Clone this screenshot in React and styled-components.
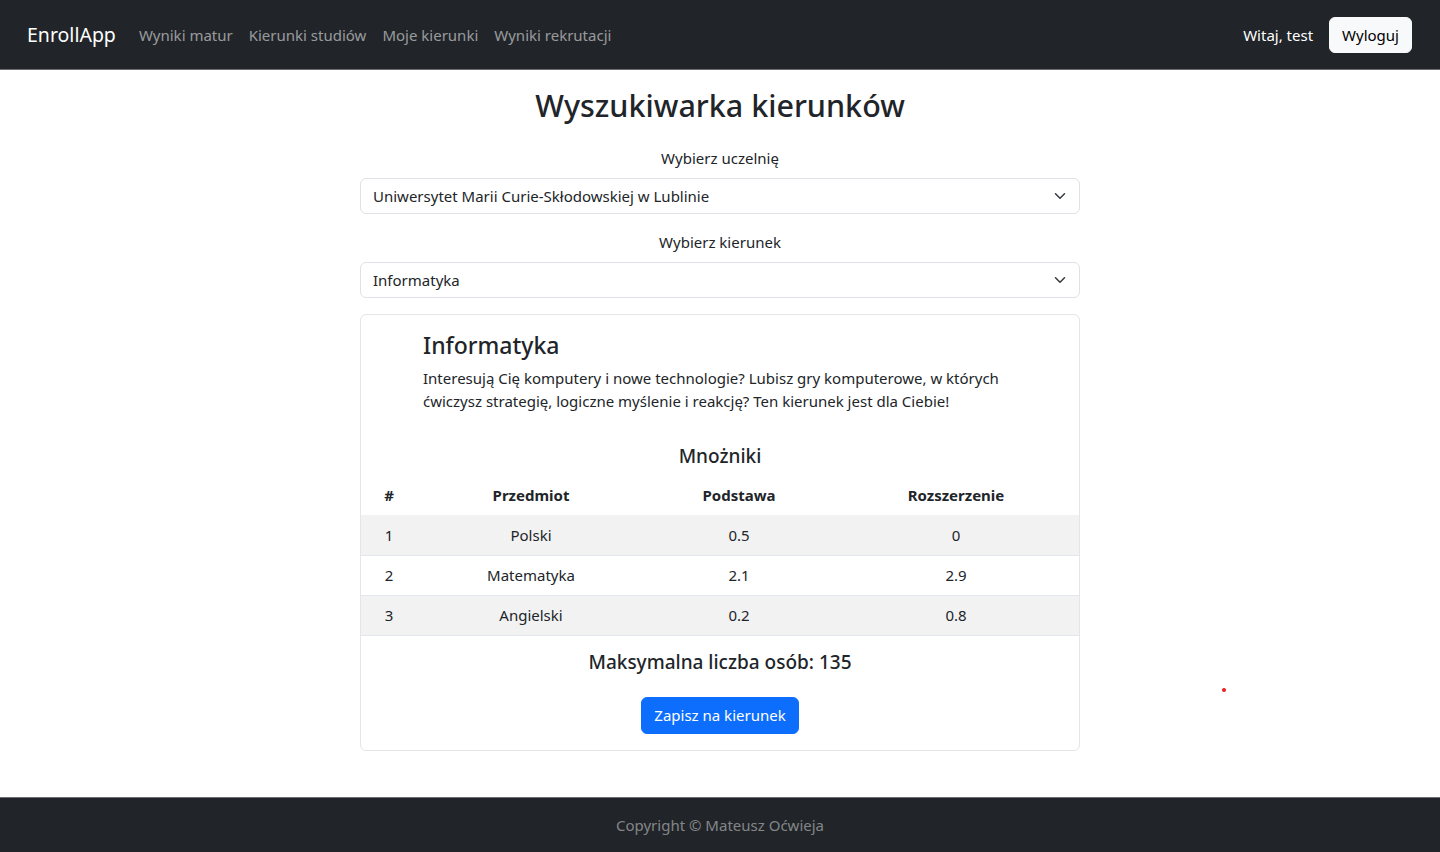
import React from 'react'
import styled, { createGlobalStyle } from 'styled-components'

const GlobalStyle = createGlobalStyle`
  html, body {
    margin: 0;
    padding: 0;
  }

  body {
    font-family: "Noto Sans", "Open Sans", sans-serif;
    font-size: 15px;
    color: #212529;
    background: #fff;
  }

  * {
    box-sizing: border-box;
  }
`

const Page = styled.div`
  position: relative;
  min-height: 100vh;
  display: flex;
  flex-direction: column;
`

const NavBar = styled.nav`
  height: 70px;
  padding: 0 28px 0 27px;
  display: flex;
  align-items: center;
  background-color: #212529;
  border-bottom: 1px solid #6b6e71;
`

const Brand = styled.a`
  margin-right: 15px;
  font-size: 19.5px;
  color: #fff;
  text-decoration: none;
`

const NavLinks = styled.div`
  display: flex;
  flex: 1;
`

const NavLink = styled.a`
  padding: 0 8px;
  font-size: 15px;
  color: rgba(255, 255, 255, 0.55);
  text-decoration: none;
`

const UserBox = styled.div`
  display: flex;
  align-items: center;
  gap: 16px;
`

const Greeting = styled.span`
  font-size: 15px;
  color: #fff;
`

const LightButton = styled.button`
  height: 36px;
  padding: 0 12px;
  border: 1px solid #f8f9fa;
  border-radius: 6px;
  background-color: #f8f9fa;
  font-family: inherit;
  font-size: 15px;
  color: #000;
`

const Main = styled.main`
  width: 720px;
  margin: 16px auto 0;
  padding-bottom: 46px;
  display: flex;
  flex-direction: column;
`

const Heading = styled.h2`
  margin: 0 0 22px;
  font-size: 30.5px;
  font-weight: 500;
  line-height: 38px;
  text-align: center;
`

const Label = styled.label`
  display: block;
  margin-bottom: 8px;
  line-height: 24px;
  text-align: center;
`

const SelectWrap = styled.div`
  position: relative;
  margin-bottom: 16px;
`

const Select = styled.select`
  width: 100%;
  height: 36px;
  padding: 0 36px 0 12px;
  border: 1px solid #dee2e6;
  border-radius: 6px;
  background: #fff;
  appearance: none;
  font-family: inherit;
  font-size: 15px;
  color: #212529;
`

const Chevron = styled.svg`
  position: absolute;
  top: 12px;
  right: 14px;
  width: 12px;
  height: 12px;
  pointer-events: none;
`

const Card = styled.section`
  padding: 16px 0;
  border: 1px solid #e3e5e8;
  border-radius: 6px;
  display: flex;
  flex-direction: column;
  align-items: center;
`

const Intro = styled.div`
  align-self: stretch;
  padding: 0 62px;
`

const Title = styled.h3`
  margin: 0 0 7px;
  font-size: 23px;
  font-weight: 500;
  line-height: 29px;
`

const Description = styled.p`
  margin: 0 0 32px;
  line-height: 23px;
`

const SubHeading = styled.h4`
  margin: 0 0 6px;
  font-size: 19px;
  font-weight: 500;
  line-height: 23px;
`

const Table = styled.table`
  width: 100%;
  border-collapse: collapse;
  table-layout: fixed;
  margin-bottom: 15px;
`

const Th = styled.th`
  height: 41px;
  padding: 0;
  font-weight: 700;
  text-align: center;
`

const Row = styled.tr`
  background-color: ${({ $striped }) => ($striped ? '#f2f2f2' : '#fff')};
  border-bottom: 1px solid #e2e7ee;
`

const Td = styled.td`
  height: 40px;
  padding: 0;
  text-align: center;
`

const Capacity = styled.h4`
  margin: 0 0 23px;
  font-size: 19px;
  font-weight: 500;
  line-height: 23px;
`

const PrimaryButton = styled.button`
  height: 37px;
  padding: 0 12px;
  border: 1px solid #0d6efd;
  border-radius: 6px;
  background-color: #0d6efd;
  font-family: inherit;
  font-size: 15px;
  color: #fff;
`

const Footer = styled.footer`
  margin-top: auto;
  height: 55px;
  display: flex;
  align-items: center;
  justify-content: center;
  background-color: #212529;
  border-top: 1px solid #6b6e71;
  font-size: 15px;
  color: rgba(255, 255, 255, 0.45);
`

const Dot = styled.span`
  position: absolute;
  left: 1222px;
  top: 688px;
  width: 4px;
  height: 4px;
  border-radius: 50%;
  background-color: #f01c1c;
`

const columns = [
  { name: '#', width: 56 },
  { name: 'Przedmiot', width: 228 },
  { name: 'Podstawa', width: 188 },
  { name: 'Rozszerzenie', width: 246 }
]

const multipliers = [
  { id: 1, subject: 'Polski', basic: '0.5', extended: '0' },
  { id: 2, subject: 'Matematyka', basic: '2.1', extended: '2.9' },
  { id: 3, subject: 'Angielski', basic: '0.2', extended: '0.8' }
]

const ChevronIcon = () => (
  <Chevron viewBox="0 0 16 16">
    <path d="m2 5 6 6 6-6" fill="none" stroke="#343a40" strokeWidth="2" strokeLinecap="round" strokeLinejoin="round" />
  </Chevron>
)

const App = () => (
  <Page>
    <GlobalStyle />
    <NavBar>
      <Brand href="#">EnrollApp</Brand>
      <NavLinks>
        <NavLink href="#">Wyniki matur</NavLink>
        <NavLink href="#">Kierunki studiów</NavLink>
        <NavLink href="#">Moje kierunki</NavLink>
        <NavLink href="#">Wyniki rekrutacji</NavLink>
      </NavLinks>
      <UserBox>
        <Greeting>Witaj, test</Greeting>
        <LightButton>Wyloguj</LightButton>
      </UserBox>
    </NavBar>

    <Main>
      <Heading>Wyszukiwarka kierunków</Heading>

      <Label htmlFor="uni">Wybierz uczelnię</Label>
      <SelectWrap>
        <Select id="uni" defaultValue="umcs">
          <option value="umcs">Uniwersytet Marii Curie-Skłodowskiej w Lublinie</option>
        </Select>
        <ChevronIcon />
      </SelectWrap>

      <Label htmlFor="major">Wybierz kierunek</Label>
      <SelectWrap>
        <Select id="major" defaultValue="inf">
          <option value="inf">Informatyka</option>
        </Select>
        <ChevronIcon />
      </SelectWrap>

      <Card>
        <Intro>
          <Title>Informatyka</Title>
          <Description>
            Interesują Cię komputery i nowe technologie? Lubisz gry komputerowe, w których
            ćwiczysz strategię, logiczne myślenie i reakcję? Ten kierunek jest dla Ciebie!
          </Description>
        </Intro>

        <SubHeading>Mnożniki</SubHeading>
        <Table>
          <colgroup>
            {columns.map(({ name, width }) => <col key={name} style={{ width }} />)}
          </colgroup>
          <thead>
            <tr>
              {columns.map(({ name }) => <Th key={name}>{name}</Th>)}
            </tr>
          </thead>
          <tbody>
            {multipliers.map(({ id, subject, basic, extended }) => (
              <Row key={id} $striped={id % 2 === 1}>
                <Td>{id}</Td>
                <Td>{subject}</Td>
                <Td>{basic}</Td>
                <Td>{extended}</Td>
              </Row>
            ))}
          </tbody>
        </Table>

        <Capacity>Maksymalna liczba osób: 135</Capacity>
        <PrimaryButton>Zapisz na kierunek</PrimaryButton>
      </Card>
    </Main>

    <Footer>Copyright © Mateusz Oćwieja</Footer>
    <Dot />
  </Page>
)

export default App
